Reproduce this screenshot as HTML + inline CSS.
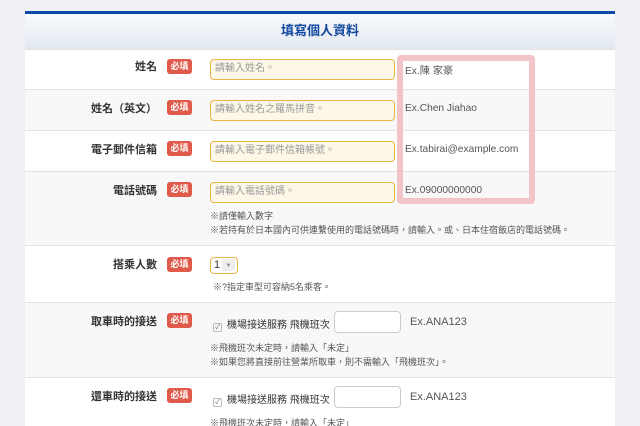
<!DOCTYPE html>
<html style="width:640px;height:426px;overflow:hidden"><head><meta charset="utf-8"><style>
*{margin:0;padding:0;box-sizing:border-box}
body{width:640px;height:426px;overflow:hidden;background:#eef0f4;font-family:"Liberation Sans","Noto Sans CJK TC",sans-serif;position:relative}
.card{position:absolute;left:25px;top:11px;width:590px;height:415px;overflow:hidden;background:#fff;border-top:3px solid #0a47a6}
.hd{position:absolute;left:0;top:0;width:100%;height:35px;background:linear-gradient(#f8fafc,#e3e9f1);text-align:center;font-size:13px;font-weight:bold;color:#1148a0;line-height:34px}
.row{position:absolute;left:0;width:100%;border-top:1px solid #e2e2e2}
.g{background:#f8f8f8}
.lab{position:absolute;right:458px;font-size:11px;font-weight:bold;color:#333;white-space:nowrap}
.b{position:absolute;left:142px;width:25px;height:15px;background:#e05a4b;color:#fff;font-size:9px;font-weight:bold;text-align:center;line-height:15px;border-radius:3px}
.in{position:absolute;left:185px;width:185px;height:21px;background:#fdf7e8;border:1.5px solid #e9b547;border-radius:4px;font-size:10px;color:#999;padding-left:4px;line-height:18px}
.ex{position:absolute;left:380px;font-size:10.2px;color:#555}
.note{position:absolute;left:185px;font-size:9px;color:#555;line-height:14px;white-space:nowrap}
.fl{position:absolute;left:188px;font-size:10px;color:#333;white-space:nowrap}
.cb{display:inline-block;width:9px;height:9px;border:1px solid #bbb;border-radius:2px;font-size:7px;line-height:8px;text-align:center;color:#666;margin-right:5px;vertical-align:-1px}
.fb{position:absolute;left:309px;width:67px;height:22px;background:#fff;border:1px solid #ccc;border-radius:4px}
</style></head><body>
<div class="card">
<div class="hd">填寫個人資料</div>
<div class="row" style="top:35px;height:40px"><div class="lab" style="top:8px">姓名</div><div class="b" style="top:9px">必填</div><div class="in" style="top:9px">請輸入姓名。</div><div class="ex" style="top:12px">Ex.陳 家豪</div></div>
<div class="row g" style="top:75px;height:41px"><div class="lab" style="top:10px">姓名（英文）</div><div class="b" style="top:10px">必填</div><div class="in" style="top:10px">請輸入姓名之羅馬拼音。</div><div class="ex" style="top:13px">Ex.Chen Jiahao</div></div>
<div class="row" style="top:116px;height:41px"><div class="lab" style="top:10px">電子郵件信箱</div><div class="b" style="top:10px">必填</div><div class="in" style="top:10px">請輸入電子郵件信箱帳號。</div><div class="ex" style="top:13px">Ex.tabirai@example.com</div></div>
<div class="row g" style="top:157px;height:74px"><div class="lab" style="top:10px">電話號碼</div><div class="b" style="top:10px">必填</div><div class="in" style="top:10px">請輸入電話號碼。</div><div class="ex" style="top:13px">Ex.09000000000</div>
<div class="note" style="top:37px">※請僅輸入數字<br>※若持有於日本國內可供連繫使用的電話號碼時，請輸入。或、日本住宿飯店的電話號碼。</div></div>
<div class="row" style="top:231px;height:57px"><div class="lab" style="top:10px">搭乘人數</div><div class="b" style="top:11px">必填</div>
<div style="position:absolute;left:185px;top:11px;width:28px;height:17px;border:1.5px solid #e9b547;border-radius:4px;background:#fff;font-size:11px;line-height:14px;padding-left:3px;color:#333">1<span style="position:absolute;left:11px;top:1px;width:13px;height:12px;background:#eee;font-size:6px;text-align:center;color:#888">▼</span></div>
<div class="note" style="top:34px;left:188px">※?指定車型可容納5名乘客。</div></div>
<div class="row g" style="top:288px;height:75px"><div class="lab" style="top:10px">取車時的接送</div><div class="b" style="top:10px">必填</div>
<div class="fl" style="top:13px"><span class="cb">✓</span>機場接送服務 飛機班次</div><div class="fb" style="top:8px"></div><div class="ex" style="top:13px;left:385px;font-size:11px">Ex.ANA123</div>
<div class="note" style="top:38px">※飛機班次未定時，請輸入「未定」<br>※如果您將直接前往營業所取車，則不需輸入「飛機班次」。</div></div>
<div class="row" style="top:363px;height:70px"><div class="lab" style="top:10px">還車時的接送</div><div class="b" style="top:10px">必填</div>
<div class="fl" style="top:13px"><span class="cb">✓</span>機場接送服務 飛機班次</div><div class="fb" style="top:8px"></div><div class="ex" style="top:13px;left:385px;font-size:11px">Ex.ANA123</div>
<div class="note" style="top:38px">※飛機班次未定時，請輸入「未定」</div></div>
</div>
<div style="position:absolute;left:397px;top:55px;width:138px;height:149px;border:6px solid #f2c3c7;border-radius:4px"></div>
</body></html>
